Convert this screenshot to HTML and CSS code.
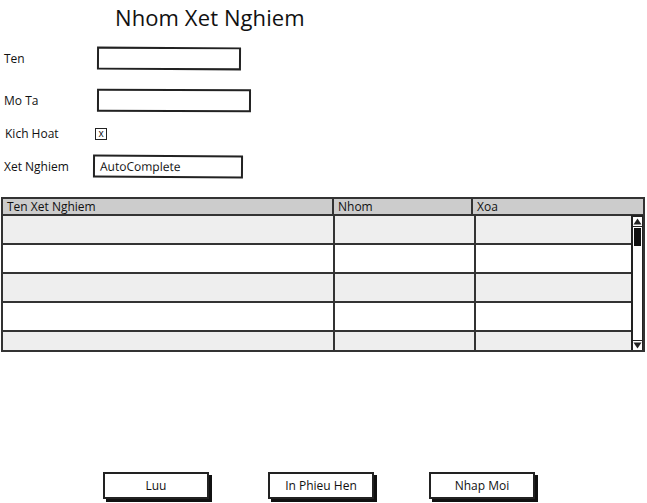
FILE: index.html
```html
<!DOCTYPE html>
<html>
<head>
<meta charset="utf-8">
<link rel="stylesheet" href="styles.css">
</head>
<body>
<div class="page">
  <h1 class="title">Nhom Xet Nghiem</h1>
  <div class="form">
    <div class="row row-ten">
      <span class="label">Ten</span>
      <span class="box box-ten"></span>
    </div>
    <div class="row row-mota">
      <span class="label">Mo Ta</span>
      <span class="box box-mota"></span>
    </div>
    <div class="row row-kich">
      <span class="label">Kich Hoat</span>
      <span class="check">x</span>
    </div>
    <div class="row row-xet">
      <span class="label">Xet Nghiem</span>
      <span class="box box-xet">AutoComplete</span>
    </div>
  </div>
  <div class="grid">
    <div class="cols">
      <div class="grow head">
        <div class="c c1">Ten Xet Nghiem</div>
        <div class="c c2">Nhom</div>
        <div class="c c3">Xoa</div>
        <div class="c c4"></div>
      </div>
      <div class="body">
        <div class="rows">
          <div class="grow odd"><div class="c c1"></div><div class="c c2"></div><div class="c c3"></div></div>
          <div class="grow even"><div class="c c1"></div><div class="c c2"></div><div class="c c3"></div></div>
          <div class="grow odd"><div class="c c1"></div><div class="c c2"></div><div class="c c3"></div></div>
          <div class="grow even"><div class="c c1"></div><div class="c c2"></div><div class="c c3"></div></div>
          <div class="grow odd last"><div class="c c1"></div><div class="c c2"></div><div class="c c3"></div></div>
        </div>
        <div class="scroll">
          <div class="arrow up"><svg width="9" height="7" viewBox="0 0 9 7"><polygon points="0.5,6.5 4.5,0.5 8.5,6.5" fill="#222"/></svg></div>
          <div class="track"><div class="thumb"></div></div>
          <div class="arrow down"><svg width="9" height="7" viewBox="0 0 9 7"><polygon points="0.5,0.5 4.5,6.5 8.5,0.5" fill="#222"/></svg></div>
        </div>
      </div>
    </div>
  </div>
  <div class="buttons">
    <div class="btn">Luu</div>
    <div class="btn">In Phieu Hen</div>
    <div class="btn">Nhap Moi</div>
  </div>
</div>
</body>
</html>
```
FILE: styles.css
```css
html, body {
  margin: 0;
  padding: 0;
  background: #fff;
}
body {
  font-family: "Open Sans", "DejaVu Sans", sans-serif;
  color: #111;
  width: 647px;
  height: 503px;
  overflow: hidden;
}
.page {
  display: flex;
  flex-direction: column;
}
.title {
  margin: 0;
  padding: 2px 0 0 115px;
  font-size: 22px;
  font-weight: 400;
  line-height: 30px;
  height: 30px;
  letter-spacing: 0.1px;
}
.form {
  display: flex;
  flex-direction: column;
  margin-top: 15px;
}
.row {
  display: flex;
  align-items: center;
  font-size: 12px;
}
.label {
  width: 93px;
  padding-left: 4px;
}
.box {
  display: block;
  border: 2px solid #222;
  height: 19px;
  box-sizing: content-box;
  background: #fff;
  font-size: 12px;
  line-height: 19px;
  padding-left: 5px;
}
.box-ten { width: 135px; transform: rotate(0.3deg); }
.box-mota { width: 145px; transform: rotate(0.2deg); }
.row-mota { margin-top: 19px; }
.row-kich { margin-top: 13px; }
.row-xet { margin-top: 13px; }
.row-kich .label { padding-left: 5px; width: 90px; }
.check {
  display: block;
  width: 10px;
  height: 10px;
  border: 1px solid #222;
  font-size: 10px;
  line-height: 9px;
  text-align: center;
}
.row-xet .label { width: 89px; padding-left: 4px; }
.box-xet { width: 141px; transform: rotate(0.3deg); }
.grid {
  margin: 19px 2px 0 1px;
  border: 2px solid #333;
  height: 151px;
  background: #eee;
  overflow: hidden;
}
.cols {
  display: flex;
  flex-direction: column;
}
.grow {
  display: flex;
}
.head {
  background: #ccc;
  height: 15px;
  border-bottom: 2px solid #333;
  font-size: 12px;
  line-height: 15px;
}
.head .c { padding-left: 4px; box-sizing: border-box; }
.c1 { width: 331px; border-right: 2px solid #333; }
.c2 { width: 139px; border-right: 2px solid #333; }
.c3 { width: 156px; }
.head .c4 { flex: 1; }
.body {
  display: flex;
}
.rows {
  display: flex;
  flex-direction: column;
  width: 628px;
}
.rows .grow {
  height: 27px;
  border-bottom: 2px solid #333;
}
.odd { background: #eee; }
.even { background: #fff; }
.rows .last { border-bottom: none; height: 20px; }
.scroll {
  width: 11px;
  margin-top: -1px;
  border: 2px solid #222;
  background: #fff;
  display: flex;
  flex-direction: column;
  height: 133px;
}
.arrow {
  height: 9px;
  display: flex;
  align-items: center;
  justify-content: center;
  border-bottom: 1px solid #222;
}
.arrow.down {
  border-bottom: none;
  border-top: 1px solid #222;
}
.track {
  flex: 1;
  background: #fff;
}
.thumb {
  margin: 1px 1px 0 1px;
  height: 18px;
  background: #111;
}
.buttons {
  display: flex;
  margin: 120px 0 0 103px;
  gap: 59px;
}
.btn {
  width: 102px;
  height: 23px;
  border: 2px solid #222;
  box-shadow: 3px 3px 0 #111;
  font-size: 12px;
  line-height: 23px;
  text-align: center;
  background: #fff;
}
.btn + .btn + .btn { margin-left: -4px; }
```
